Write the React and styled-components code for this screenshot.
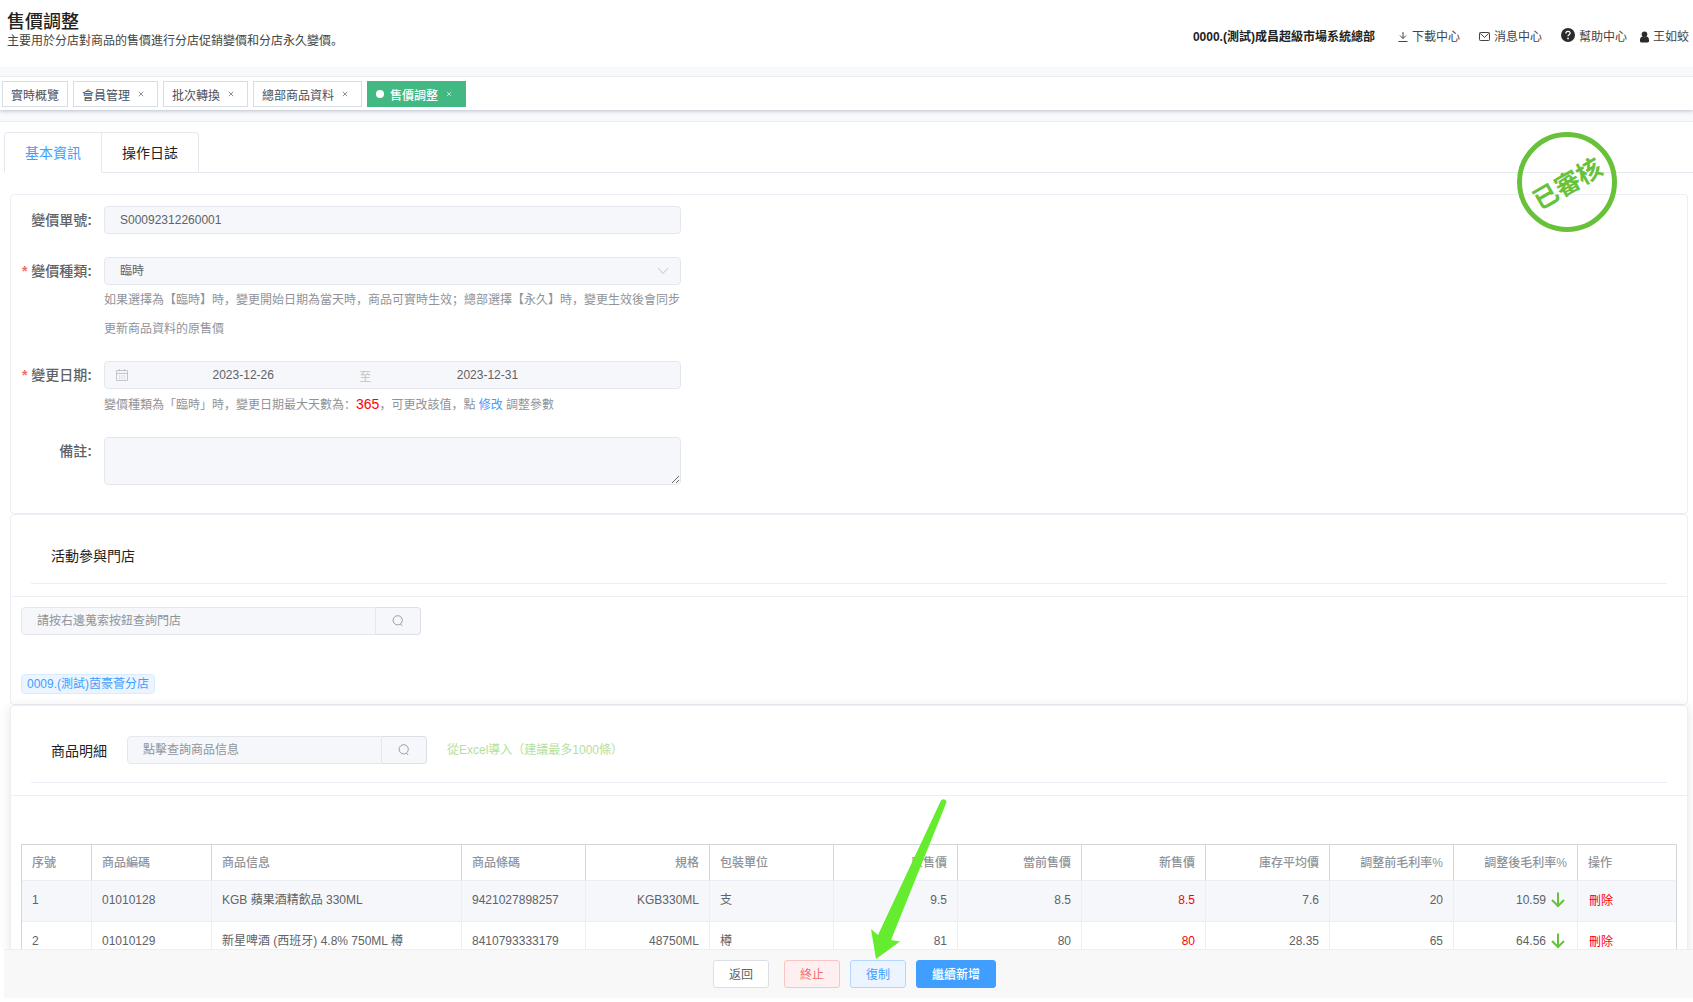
import React from "react";
import styled, { createGlobalStyle, css } from "styled-components";

const tags = [
  { name: "實時概覽", fixed: true },
  { name: "會員管理" },
  { name: "批次轉換" },
  { name: "總部商品資料" },
  { name: "售價調整", active: true },
];

const columns = [
  { title: "序號", width: 70 },
  { title: "商品編碼", width: 120 },
  { title: "商品信息", width: 250 },
  { title: "商品條碼" },
  { title: "規格", right: true },
  { title: "包裝單位" },
  { title: "原售價", right: true },
  { title: "當前售價", right: true },
  { title: "新售價", right: true },
  { title: "庫存平均價", right: true },
  { title: "調整前毛利率%", right: true },
  { title: "調整後毛利率%", right: true },
  { title: "操作", width: 99 },
];

const goods = [
  {
    code: "01010128",
    name: "KGB 蘋果酒精飲品 330ML",
    barcode: "9421027898257",
    spec: "KGB330ML",
    unit: "支",
    origin: "9.5",
    current: "8.5",
    price: "8.5",
    cost: "7.6",
    before: "20",
    after: "10.59",
  },
  {
    code: "01010129",
    name: "新星啤酒 (西班牙) 4.8% 750ML 樽",
    barcode: "8410793333179",
    spec: "48750ML",
    unit: "樽",
    origin: "81",
    current: "80",
    price: "80",
    cost: "28.35",
    before: "65",
    after: "64.56",
  },
];

const SearchIcon = () => (
  <svg width="12" height="12" viewBox="0 0 12 12" fill="none" stroke="currentColor" strokeWidth="0.9">
    <circle cx="5.7" cy="5.3" r="4.6" />
    <path d="M8.4 9 L10.2 11" />
  </svg>
);

const CloseIcon = () => (
  <svg width="6" height="6" viewBox="0 0 6 6" fill="none" stroke="currentColor" strokeWidth="0.8">
    <path d="M0.8 0.8 L5.2 5.2 M5.2 0.8 L0.8 5.2" />
  </svg>
);

const App = () => {
  return (
    <>
      <GlobalStyle />
      <Page>
        <Header>
          <div>
            <Title>售價調整</Title>
            <SubTitle>主要用於分店對商品的售價進行分店促銷變價和分店永久變價。</SubTitle>
          </div>
          <HeaderNav>
            <Company>0000.(測試)成昌超級市場系統總部</Company>
            <NavLink href="#download">
              <svg width="10" height="12" viewBox="0 0 10 12" fill="none" stroke="currentColor">
                <path d="M5 1 V7.5 M2 4.5 L5 7.5 L8 4.5 M0.5 10.5 H9.5" />
              </svg>
              下載中心
            </NavLink>
            <NavLink href="#message">
              <svg width="11" height="12" viewBox="0 0 11 12" fill="none" stroke="currentColor">
                <rect x="0.5" y="1.5" width="10" height="8" rx="0.8" />
                <path d="M1.2 2.4 L5.5 6.4 L9.8 2.4" />
              </svg>
              消息中心
            </NavLink>
            <NavLink href="#help">
              <HelpMark width="14" height="14" viewBox="0 0 14 14">
                <circle cx="7" cy="7" r="7" fill="#2b2b2b" />
                <path
                  d="M4.9 5.4 C4.9 2.8 9.1 2.8 9.1 5.2 C9.1 6.8 7 6.8 7 8.3"
                  fill="none"
                  stroke="#fff"
                  strokeWidth="1.3"
                />
                <circle cx="7" cy="10.4" r="0.9" fill="#fff" />
              </HelpMark>
              幫助中心
            </NavLink>
            <NavLink href="#user" $tight>
              <svg width="9" height="12" viewBox="0 0 9 12" fill="#2b2b2b">
                <circle cx="4.5" cy="3.3" r="2.8" />
                <path d="M0 9 C0 6.8 1.2 5.8 2.6 5.6 C3.6 6.6 5.4 6.6 6.4 5.6 C7.8 5.8 9 6.8 9 9 V10 C9 11 8.5 11.4 7.6 11.4 H1.4 C0.5 11.4 0 11 0 10 Z" />
              </svg>
              王如蛟
            </NavLink>
          </HeaderNav>
        </Header>

        <TagsBar>
          {tags.map((tag) => (
            <Tag key={tag.name} type="button" $active={tag.active}>
              {tag.active && <Dot />}
              {tag.name}
              {!tag.fixed && (
                <TagClose>
                  <CloseIcon />
                </TagClose>
              )}
            </Tag>
          ))}
        </TagsBar>

        <Content>
          <Tabs>
            <Tab type="button" $active>
              基本資訊
            </Tab>
            <Tab type="button">操作日誌</Tab>
          </Tabs>
          <Stamp>
            <span>已審核</span>
          </Stamp>

          <Card>
            <Form>
              <FormRow>
                <Label htmlFor="orderNo">
                  變價單號<b>:</b>
                </Label>
                <Field>
                  <Input id="orderNo" defaultValue="S00092312260001" readOnly />
                </Field>
              </FormRow>
              <FormRow>
                <Label htmlFor="kind" $required>
                  變價種類<b>:</b>
                </Label>
                <Field>
                  <SelectWrap>
                    <Select id="kind" defaultValue="temp">
                      <option value="temp">臨時</option>
                      <option value="forever">永久</option>
                    </Select>
                    <svg width="12" height="8" viewBox="0 0 12 8" fill="none" stroke="#c0c4cc">
                      <path d="M1 1 L6 6.5 L11 1" />
                    </svg>
                  </SelectWrap>
                  <Help>
                    如果選擇為【臨時】時，變更開始日期為當天時，商品可實時生效；總部選擇【永久】時，變更生效後會同步更新商品資料的原售價
                  </Help>
                </Field>
              </FormRow>
              <FormRow>
                <Label htmlFor="startDate" $required>
                  變更日期<b>:</b>
                </Label>
                <Field>
                  <DateRange>
                    <svg width="14" height="14" viewBox="0 0 14 14" fill="none" stroke="#c0c4cc">
                      <path d="M1.5 2.5 H12.5 V12.5 H1.5 Z M1.5 5.5 H12.5 M4.5 1 V3.5 M9.5 1 V3.5" />
                      <path d="M4 8 H11 M4 10.2 H11" strokeDasharray="1.2 1.3" />
                    </svg>
                    <DateInput id="startDate" defaultValue="2023-12-26" readOnly />
                    <DateSplit>至</DateSplit>
                    <DateInput aria-label="結束日期" defaultValue="2023-12-31" readOnly />
                  </DateRange>
                  <Help>
                    變價種類為「臨時」時，變更日期最大天數為：<MaxDays>365</MaxDays>，可更改該值，點{" "}
                    <a href="#edit">修改</a> 調整參數
                  </Help>
                </Field>
              </FormRow>
              <FormRow>
                <Label htmlFor="remark">
                  備註<b>:</b>
                </Label>
                <Field>
                  <TextArea id="remark" />
                </Field>
              </FormRow>
            </Form>
          </Card>

          <Card>
            <CardHeader>
              <CardTitle>活動參與門店</CardTitle>
            </CardHeader>
            <StoreBody>
              <Search $width={400}>
                <input aria-label="門店" placeholder="請按右邊蒐索按鈕查詢門店" />
                <button type="button" aria-label="查詢門店">
                  <SearchIcon />
                </button>
              </Search>
              <StoreTag>0009.(測試)茵豪薈分店</StoreTag>
            </StoreBody>
          </Card>

          <Card $shadow>
            <CardHeader>
              <CardTitle $tall>
                商品明細
                <Search $width={300}>
                  <input aria-label="商品" placeholder="點擊查詢商品信息" />
                  <button type="button" aria-label="查詢商品">
                    <SearchIcon />
                  </button>
                </Search>
                <ImportLink href="#import">從Excel導入（建議最多1000條）</ImportLink>
              </CardTitle>
            </CardHeader>
            <TableBody>
              <Table>
                <colgroup>
                  {columns.map((col) => (
                    <col key={col.title} width={col.width} />
                  ))}
                </colgroup>
                <thead>
                  <tr>
                    {columns.map((col) => (
                      <Th key={col.title} $right={col.right}>
                        {col.title}
                      </Th>
                    ))}
                  </tr>
                </thead>
                <tbody>
                  {goods.map((item, index) => (
                    <tr key={item.code}>
                      <Td>{index + 1}</Td>
                      <Td>{item.code}</Td>
                      <Td>{item.name}</Td>
                      <Td>{item.barcode}</Td>
                      <Td $right>{item.spec}</Td>
                      <Td>{item.unit}</Td>
                      <Td $right>{item.origin}</Td>
                      <Td $right>{item.current}</Td>
                      <Td $right $red>
                        {item.price}
                      </Td>
                      <Td $right>{item.cost}</Td>
                      <Td $right>{item.before}</Td>
                      <Td $right>
                        <Rate>
                          {item.after}
                          <svg width="18" height="16" viewBox="0 0 18 16" fill="none" stroke="#67c23a" strokeWidth="2">
                            <path d="M9 0.5 V14 M3 8 L9 14 L15 8" />
                          </svg>
                        </Rate>
                      </Td>
                      <Td>
                        <DeleteButton type="button">刪除</DeleteButton>
                      </Td>
                    </tr>
                  ))}
                </tbody>
              </Table>
            </TableBody>
          </Card>
        </Content>

        <Footer>
          <BackButton type="button">返回</BackButton>
          <Button type="button" $kind="danger">
            終止
          </Button>
          <CopyWrap>
            <Button type="button" $kind="plain">
              復制
            </Button>
            <Pointer width="78" height="163" viewBox="0 0 78 163">
              <path
                d="M6 161 L1 131 L8 137 L70.5 3.5 C72 -0.5 78 1.5 76 5.5 L21 142 L30 143.5 Z"
                fill="#66ec2e"
              />
            </Pointer>
          </CopyWrap>
          <Button type="button" $kind="primary">
            繼續新增
          </Button>
        </Footer>
      </Page>
    </>
  );
};

export default App;

const GlobalStyle = createGlobalStyle`
  * {
    box-sizing: border-box;
  }
  body {
    margin: 0;
    background-color: #fff;
  }
  body, button, input, select, textarea {
    font-family: "Liberation Sans", "Noto Sans CJK SC", sans-serif;
    font-size: 12px;
    color: #606266;
  }
  a {
    text-decoration: none;
  }
  button {
    cursor: pointer;
  }
`;

const Page = styled.div`
  display: flex;
  flex-direction: column;
  height: 100vh;
  padding-bottom: 4px;
  overflow: hidden;
`;

const Header = styled.header`
  display: flex;
  align-items: flex-start;
  justify-content: space-between;
  flex: none;
  padding: 12px 4px 16px 7px;
`;

const Title = styled.h1`
  margin: 0;
  font-size: 18px;
  font-weight: 500;
  line-height: 20px;
  color: #222;
`;

const SubTitle = styled.p`
  margin: 0;
  line-height: 19px;
  color: #444;
`;

const HeaderNav = styled.nav`
  display: flex;
  align-items: center;
  gap: 19px;
  padding-top: 15px;
  line-height: 20px;
`;

const Company = styled.strong`
  margin-right: 4px;
  color: #222;
`;

const NavLink = styled.a`
  display: flex;
  align-items: center;
  gap: 4px;
  margin-left: ${(props) => (props.$tight ? "-6px" : "0")};
  color: #444;
`;

const HelpMark = styled.svg`
  margin-bottom: 4px;
`;

const TagsBar = styled.div`
  display: flex;
  gap: 5px;
  flex: none;
  margin-top: 9px;
  padding: 4px 2px 3px;
  background-color: #fff;
  border-top: 1px solid #e9ecf1;
  box-shadow: 0 -9px 0 #f8f9fb, 0 1px 4px 0 rgba(0, 21, 60, 0.25), 0 11px 0 #f8f9fb;
`;

const Tag = styled.button`
  display: flex;
  align-items: center;
  height: 26px;
  padding: 0 8px;
  background-color: #fff;
  border: 1px solid #d8dce5;
  color: #495060;

  ${(props) =>
    props.$active &&
    css`
      background-color: #42b983;
      border-color: #42b983;
      color: #fff;
      font-weight: 500;
    `}
`;

const Dot = styled.span`
  width: 8px;
  height: 8px;
  margin-right: 6px;
  border-radius: 50%;
  background-color: #fff;
`;

const TagClose = styled.span`
  display: flex;
  align-items: center;
  justify-content: center;
  width: 16px;
  margin-left: 3px;
  opacity: 0.8;
`;

const Content = styled.main`
  position: relative;
  flex: 1;
  min-height: 0;
  margin-top: 11px;
  padding-top: 10px;
  padding-left: 4px;
  border-top: 1px solid #e9ecf1;
  overflow-y: auto;
  scrollbar-width: none;
`;

const Tabs = styled.div`
  display: flex;
  margin-bottom: 21px;
  border-bottom: 1px solid #e4e7ed;
`;

const Tab = styled.button`
  height: 41px;
  margin-bottom: -1px;
  padding: 0 20px 1px;
  font-size: 14px;
  background-color: #fff;
  border: 1px solid #e4e7ed;
  border-left-width: ${(props) => (props.$active ? "1px" : "0")};
  border-bottom-color: ${(props) => (props.$active ? "#fff" : "#e4e7ed")};
  border-radius: ${(props) => (props.$active ? "4px 0 0 0" : "0 4px 0 0")};
  color: ${(props) => (props.$active ? "#409eff" : "#222")};
`;

/* round seal over the corner of the form */
const Stamp = styled.div`
  position: absolute;
  top: 10px;
  right: 76px;
  display: flex;
  align-items: center;
  justify-content: center;
  width: 100px;
  height: 100px;
  border: 5px solid #67c23a;
  border-radius: 50%;
  color: #67c23a;
  font-size: 25px;
  font-weight: bold;

  span {
    white-space: nowrap;
    transform: rotate(-30deg);
  }
`;

const Card = styled.section`
  margin: 0 5px 0 6px;
  background-color: #fff;
  border: 1px solid #ebeef5;
  border-radius: 4px;
  box-shadow: ${(props) => (props.$shadow ? "0 2px 12px 0 rgba(0, 0, 0, 0.1)" : "none")};
`;

const Form = styled.div`
  display: flex;
  flex-direction: column;
  gap: 18px;
  padding: 11px 10px 28px;
`;

const FormRow = styled.div`
  display: flex;
  min-height: 33px;
`;

const Label = styled.label`
  width: 83px;
  padding-right: 12px;
  line-height: 28px;
  font-size: 14px;
  font-weight: 500;
  text-align: right;
  white-space: nowrap;

  &::before {
    content: "${(props) => (props.$required ? "*" : "")}";
    margin-right: 4px;
    font-weight: bold;
    color: #f56c6c;
  }
`;

const Field = styled.div`
  width: 577px;
`;

const box = css`
  background-color: #f5f7fa;
  border: 1px solid #e4e7ed;
  border-radius: 4px;
  outline: none;
`;

const Input = styled.input`
  ${box}
  display: block;
  width: 100%;
  height: 28px;
  padding: 0 15px;
`;

const SelectWrap = styled.div`
  position: relative;

  svg {
    position: absolute;
    top: 10px;
    right: 12px;
    pointer-events: none;
  }
`;

const Select = styled.select`
  ${box}
  display: block;
  width: 100%;
  height: 28px;
  padding: 0 15px;
  appearance: none;
`;

const Help = styled.div`
  margin: 1px 0 -1px;
  line-height: 29px;
  color: #909399;

  a {
    color: #409eff;
  }
`;

const MaxDays = styled.span`
  font-size: 14px;
  color: #f00;
`;

const DateRange = styled.div`
  ${box}
  display: flex;
  align-items: center;
  height: 28px;
  padding: 0 10px;

  svg {
    flex: none;
    margin-right: 6px;
  }
`;

const DateInput = styled.input`
  width: 39%;
  padding: 0;
  border: none;
  outline: none;
  background: transparent;
  text-align: center;
`;

const DateSplit = styled.span`
  width: 5%;
  text-align: center;
  color: #c0c4cc;
`;

const TextArea = styled.textarea`
  ${box}
  display: block;
  width: 100%;
  height: 48px;
  padding: 5px 15px;
  resize: vertical;
`;

const CardHeader = styled.div`
  padding: 20px 20px 12px;
  border-bottom: 1px solid #ebeef5;
`;

const CardTitle = styled.div`
  display: flex;
  align-items: center;
  height: ${(props) => (props.$tall ? "57px" : "49px")};
  padding: 0 20px 8px;
  font-size: 14px;
  color: #222;
  border-bottom: 1px solid #ebeef5;
`;

const Search = styled.div`
  display: flex;
  width: ${(props) => props.$width}px;
  height: 28px;

  ${CardTitle} & {
    margin: 0 20px;
  }

  input {
    ${box}
    flex: 1;
    min-width: 0;
    padding: 0 15px;
    border-radius: 4px 0 0 4px;
  }
  input::placeholder {
    color: #909399;
  }
  button {
    display: flex;
    align-items: center;
    justify-content: center;
    width: 45px;
    padding: 0;
    background-color: #f5f7fa;
    border: 1px solid #dcdfe6;
    border-left: none;
    border-radius: 0 4px 4px 0;
    color: #909399;
  }
`;

const StoreBody = styled.div`
  padding: 10px;
`;

const StoreTag = styled.span`
  display: inline-block;
  margin-top: 39px;
  padding: 0 5px;
  line-height: 18px;
  background-color: #ecf5ff;
  border: 1px solid #d9ecff;
  border-radius: 4px;
  color: #409eff;
  vertical-align: top;
`;

const ImportLink = styled.a`
  padding-bottom: 4px;
  font-size: 12px;
  color: #b3e19d;
`;

const TableBody = styled.div`
  padding: 48px 10px 20px;
`;

const Table = styled.table`
  width: 100%;
  table-layout: fixed;
  border-collapse: separate;
  border-spacing: 0;
  border: 1px solid #d3d5d9;
  border-right: none;
  line-height: 18px;

  tbody tr:nth-child(odd) {
    background-color: #f5f7fb;
  }
  th:last-child,
  td:last-child {
    border-right-color: #d3d5d9;
  }
`;

const Th = styled.th`
  height: 36px;
  padding: 0 10px;
  text-align: ${(props) => (props.$right ? "right" : "left")};
  font-weight: 500;
  white-space: nowrap;
  color: #909399;
  border-right: 1px solid #d3d5d9;
  border-bottom: 1px solid #ebeef5;
`;

const Td = styled.td`
  height: 41px;
  padding: 0 10px 2px;
  text-align: ${(props) => (props.$right ? "right" : "left")};
  color: ${(props) => (props.$red ? "#f00" : "#606266")};
  white-space: nowrap;
  border-right: 1px solid #ebeef5;
  border-bottom: 1px solid #ebeef5;
`;

const Rate = styled.span`
  display: flex;
  align-items: center;
  justify-content: flex-end;
  gap: 3px;
`;

const DeleteButton = styled.button`
  padding: 0 1px;
  background: none;
  border: none;
  color: #f00;
`;

const Footer = styled.footer`
  position: relative;
  display: flex;
  align-items: center;
  justify-content: center;
  gap: 10px;
  flex: none;
  height: 49px;
  margin-left: 4px;
  padding-left: 12px;
  background-color: #f8f8f8;
  border-top: 1px solid #ebeef5;
`;

const kinds = {
  plain: css`
    background-color: #ecf5ff;
    border-color: #b3d8ff;
    color: #409eff;
  `,
  danger: css`
    background-color: #fef0f0;
    border-color: #fbc4c4;
    color: #f56c6c;
  `,
  primary: css`
    background-color: #409eff;
    border-color: #409eff;
    color: #fff;
    font-weight: 500;
  `,
};

const Button = styled.button`
  height: 28px;
  padding: 0 15px 1px;
  background-color: #fff;
  border: 1px solid #dcdfe6;
  border-radius: 3px;
  ${(props) => kinds[props.$kind]}
`;

const BackButton = styled(Button)`
  margin-right: 5px;
`;

const CopyWrap = styled.div`
  position: relative;
`;

const Pointer = styled.svg`
  position: absolute;
  left: 20px;
  bottom: 27px;
  pointer-events: none;
`;
